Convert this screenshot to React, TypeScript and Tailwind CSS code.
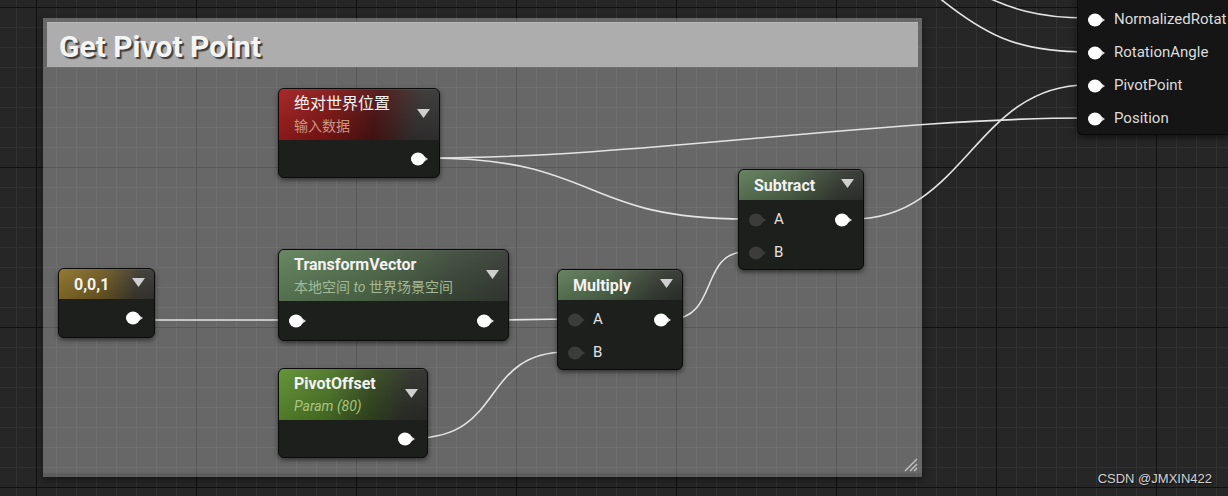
import React from 'react'

const font = "font-['Roboto','Noto_Sans_CJK_SC',sans-serif]"

function Pin({ dark = false }: { dark?: boolean }) {
  const c = dark ? '#3c3d3a' : '#ffffff'
  const a = dark ? '#3c3d3a' : '#d8d8d8'
  return (
    <svg width="18" height="14" viewBox="0 0 18 14" className="shrink-0">
      <path d="M12 3.5 L17 7 L12 10.5 Z" fill={a} />
      <ellipse cx="7" cy="7" rx="7" ry="6.5" fill={c} />
    </svg>
  )
}

function Caret() {
  return (
    <svg width="13" height="9" viewBox="0 0 13 9" className="shrink-0">
      <path d="M0 0 H13 L6.5 9 Z" fill="#cfcfcf" />
    </svg>
  )
}

type NodeProps = {
  pos: string
  header: string
  title: string
  titleWeight?: string
  sub?: React.ReactNode
  subColor?: string
  children: React.ReactNode
}

function Node({ pos, header, title, titleWeight = 'font-bold', sub, subColor, children }: NodeProps) {
  return (
    <div
      className={`absolute ${pos} rounded-[6px] border border-[#0b0b0b] bg-[#1d1f1c] shadow-[0_2px_5px_rgba(0,0,0,0.55)] overflow-hidden ${font}`}
    >
      <div className={`relative ${header} ${sub ? 'h-[51px]' : 'h-[30px]'} pl-[15px] pr-[9px] flex items-start justify-between border-t border-white/15`}>
        <div className="flex flex-col">
          <div className={`${sub ? 'pt-[4px]' : 'pt-[5px]'} text-[16px] ${titleWeight} leading-[20px] text-[#f2f2f2]`}>{title}</div>
          {sub && <div className={`pt-[3px] text-[14px] leading-[18px] ${subColor}`}>{sub}</div>}
        </div>
        <div className={sub ? 'pt-[19px]' : 'pt-[8px]'}>
          <Caret />
        </div>
      </div>
      {children}
    </div>
  )
}

function OutRow({ h, pr }: { h: string; pr: string }) {
  return (
    <div className={`flex items-center justify-end ${h} ${pr}`}>
      <Pin />
    </div>
  )
}

function MathBody() {
  return (
    <div className="pt-[3px] pl-[10px] pr-[10px]">
      <div className="flex items-center h-[33px]">
        <Pin dark />
        <span className="ml-[7px] text-[15px] text-[#e2e2e2]">A</span>
        <div className="ml-auto">
          <Pin />
        </div>
      </div>
      <div className="flex items-center h-[33px]">
        <Pin dark />
        <span className="ml-[7px] text-[15px] text-[#e2e2e2]">B</span>
      </div>
    </div>
  )
}

const W = '#e4e4e4'

export default function App() {
  return (
    <div className="relative w-[1228px] h-[496px] overflow-hidden bg-[#262626] bg-[linear-gradient(to_right,#101010_1px,transparent_1px),linear-gradient(to_bottom,#101010_1px,transparent_1px),linear-gradient(to_right,#313131_1px,transparent_1px),linear-gradient(to_bottom,#313131_1px,transparent_1px)] bg-[size:160px_160px,160px_160px,20px_20px,20px_20px] bg-[position:36px_7px,36px_7px,16px_7px,16px_7px]">
      {/* comment box */}
      <div className="absolute left-[43px] top-[18px] w-[879px] h-[459px] bg-white/30 border-b-[4px] border-black/10 shadow-[0_3px_7px_rgba(0,0,0,0.45)]">
        <div className="mx-[4px] mt-[4px] h-[45px] bg-[#adadad] border-t border-[#b8b8b8] flex items-center pl-[12px] pt-[3px]">
          <span className={`${font} text-[30px] font-bold text-[#f4f4f4] [text-shadow:2px_2px_1px_rgba(0,0,0,0.65)]`}>
            Get Pivot Point
          </span>
        </div>
        <svg width="16" height="14" viewBox="0 0 16 14" className="absolute right-[4px] bottom-[1px]">
          <path d="M3 13 L15 1 M8 13 L15 6 M12 13 L15 10" stroke="#c8c8c8" strokeWidth="1.3" />
        </svg>
      </div>

      {/* wires */}
      <svg className="absolute inset-0" width="1228" height="496" fill="none" stroke={W} strokeWidth="1.6">
        <path d="M428 158 C 600 158, 580 219, 745 219" />
        <path d="M428 158 C 640 158, 880 118, 1087 118" />
        <path d="M143 320 L 287 320" />
        <path d="M498 320 L 567 319" />
        <path d="M415 438 C 505 438, 480 352, 567 352" />
        <path d="M671 319 C 718 319, 700 252, 745 252" />
        <path d="M853 219 C 965 219, 975 85, 1087 85" />
        <path d="M925 -14 C 985 38, 1020 52, 1087 52" />
        <path d="M968 -12 C 1010 10, 1040 18, 1087 18" />
      </svg>

      <Node
        pos="left-[278px] top-[88px] w-[162px]"
        header="bg-[linear-gradient(to_bottom,rgba(255,255,255,0.06),rgba(0,0,0,0.12)),linear-gradient(100deg,#a11d1d_0%,#7c1414_35%,#4a1212_60%,#353131_85%,#333333_100%)]"
        title="绝对世界位置"
        titleWeight="font-normal"
        sub="输入数据"
        subColor="text-[#c99883]"
      >
        <OutRow h="h-[37px]" pr="pr-[10px]" />
      </Node>

      <Node
        pos="left-[58px] top-[268px] w-[97px]"
        header="bg-[linear-gradient(to_bottom,rgba(255,255,255,0.05),rgba(0,0,0,0.12)),linear-gradient(100deg,#8e7229_0%,#6f5a22_45%,#3d3a30_80%,#363636_100%)]"
        title="0,0,1"
      >
        <OutRow h="h-[38px]" pr="pr-[10px]" />
      </Node>

      <Node
        pos="left-[278px] top-[249px] w-[231px]"
        header="bg-[linear-gradient(to_bottom,rgba(255,255,255,0.05),rgba(0,0,0,0.12)),linear-gradient(100deg,#61815b_0%,#4f6a4a_40%,#3d4a3a_75%,#363a35_100%)]"
        title="TransformVector"
        sub={
          <>
            本地空间 <i>to</i> 世界场景空间
          </>
        }
        subColor="text-[#a4ba94]"
      >
        <div className="flex items-center justify-between h-[39px] pl-[10px] pr-[13px]">
          <Pin />
          <Pin />
        </div>
      </Node>

      <Node
        pos="left-[557px] top-[269px] w-[126px]"
        header="bg-[linear-gradient(to_bottom,rgba(255,255,255,0.05),rgba(0,0,0,0.12)),linear-gradient(100deg,#5f7d59_0%,#4e6649_40%,#353b33_80%,#2f312e_100%)]"
        title="Multiply"
      >
        <MathBody />
      </Node>

      <Node
        pos="left-[738px] top-[169px] w-[126px]"
        header="bg-[linear-gradient(to_bottom,rgba(255,255,255,0.05),rgba(0,0,0,0.12)),linear-gradient(100deg,#5f7d59_0%,#4e6649_40%,#353b33_80%,#2f312e_100%)]"
        title="Subtract"
      >
        <MathBody />
      </Node>

      <Node
        pos="left-[278px] top-[368px] w-[150px]"
        header="bg-[linear-gradient(to_bottom,rgba(255,255,255,0.05),rgba(0,0,0,0.12)),linear-gradient(100deg,#5e8f2f_0%,#4b7426_35%,#34481f_62%,#2d2f29_85%,#2c2d2a_100%)]"
        title="PivotOffset"
        sub={<i>Param (80)</i>}
        subColor="text-[#a9c57f]"
      >
        <OutRow h="h-[37px]" pr="pr-[11px]" />
      </Node>

      {/* output node at top right, cut by the window edge */}
      <div className={`absolute left-[1077px] top-[-10px] w-[151px] h-[145px] rounded-bl-[6px] border-l border-b border-[#0b0b0b] bg-[#141514] shadow-[0_2px_6px_rgba(0,0,0,0.6)] pt-[13px] pl-[10px] overflow-hidden ${font}`}>
        {['NormalizedRotat', 'RotationAngle', 'PivotPoint', 'Position'].map((t) => (
          <div key={t} className="flex items-center h-[33px] whitespace-nowrap">
            <Pin />
            <span className="ml-[8px] text-[15px] text-[#dddddd]">{t}</span>
          </div>
        ))}
      </div>

      <div className="absolute right-[16px] bottom-[8px] font-['Liberation_Sans',sans-serif] text-[13px] text-[#d2d2d2] [text-shadow:1px_1px_1px_rgba(0,0,0,0.6)]">
        CSDN @JMXIN422
      </div>
    </div>
  )
}
